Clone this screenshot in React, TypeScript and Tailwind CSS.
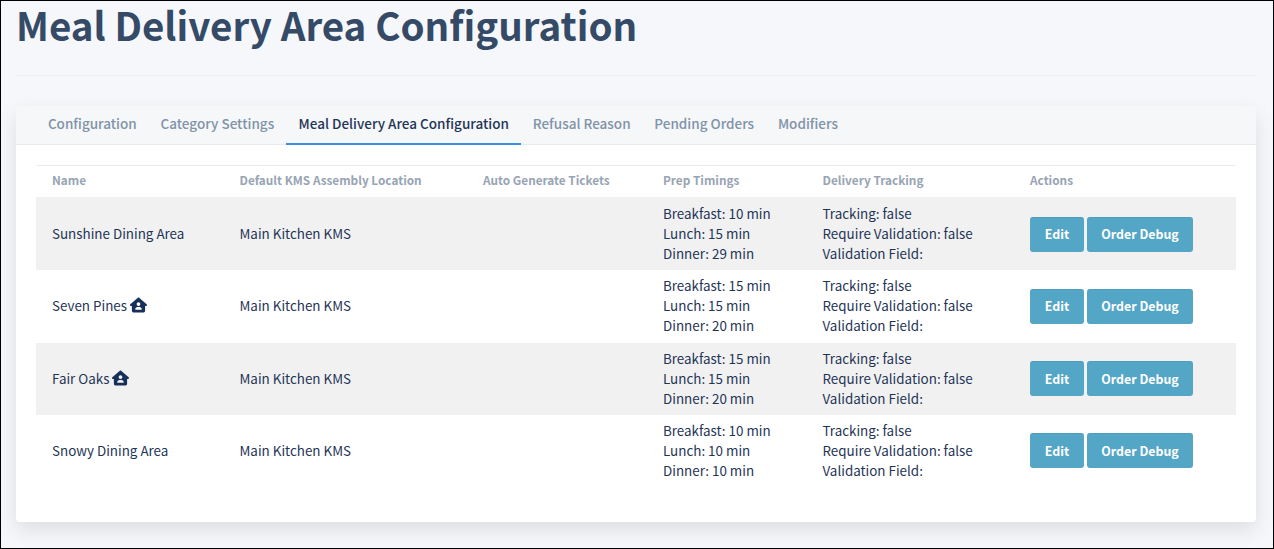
import React from "react";
import { FaHouseUser } from "react-icons/fa6";

const tabs = ["Configuration", "Category Settings", "Meal Delivery Area Configuration", "Refusal Reason", "Pending Orders", "Modifiers"];
const rows = [
  { name: "Sunshine Dining Area", home: false, t: [10, 15, 29], h: "h-[73px] bg-[#f1f1f1] text-[13.4px]", n: "pl-[16px]", c: "pl-[16px] leading-[20px]", b: "pl-[16px] pt-[2px]" },
  { name: "Seven Pines", home: true, t: [15, 15, 20], h: "h-[73px] bg-white text-[13.4px]", n: "pl-[16px] pb-[1px]", c: "pl-[16px] pb-[2px] leading-[20px]", b: "pl-[16px]" },
  { name: "Fair Oaks", home: true, t: [15, 15, 20], h: "h-[72px] bg-[#f1f1f1] text-[13.4px]", n: "pl-[16px]", c: "pl-[16px] pb-[1px] leading-[20px]", b: "pl-[16px]" },
  { name: "Snowy Dining Area", home: false, t: [10, 10, 10], h: "h-[72px] bg-white text-[13.4px]", n: "pl-[16px]", c: "pl-[16px] pb-[1px] leading-[20px]", b: "pl-[16px]" },
];

export default function App() {
  return (
    <div className="h-[549px] w-[1274px] overflow-hidden border border-black bg-[#f5f7fa] pl-[15px] pr-[17px] font-['Noto_Sans_CJK_SC',sans-serif] text-[#1f3557]">
      <h1 className="h-[75px] border-b border-[#eceef1] text-[38.55px] font-bold leading-[47px] text-[#344a66]">
        Meal Delivery Area Configuration
      </h1>
      <div className="mt-[30px] h-[416px] rounded-[4px] bg-white shadow-[0_8px_20px_rgba(0,0,0,0.1)]">
        <div className="flex h-[39px] rounded-t-[4px] border-b border-[#e9ecef] bg-[#f6f7f9] px-[20px]">
          {tabs.map((t, i) => (
            <div
              key={t}
              className={
                i === 2
                  ? "flex h-[39px] items-center border-b-2 border-[#3b8fe0] pl-[12.5px] pr-[12px] pb-[2px] text-[13.5px] font-medium text-[#1f3557]"
                  : "flex h-[38px] items-center px-[11.9px] pb-[3px] text-[13.5px] font-medium text-[#8093a7]"
              }
            >
              {t}
            </div>
          ))}
        </div>
        <div className="px-[20px] pt-[20px]">
          <table className="w-full table-fixed border-collapse border-t border-[#e9ecef] text-left">
            <thead>
              <tr className="h-[31px]">
                <th className="w-[187.5px] pb-[3px] pl-[16px] text-[11.8px] font-bold text-[#98a4b3]">Name</th>
                <th className="w-[243.5px] pb-[3px] pl-[16px] text-[11.8px] font-bold text-[#98a4b3]">Default KMS Assembly Location</th>
                <th className="w-[180px] pb-[3px] pl-[16px] text-[11.8px] font-bold text-[#98a4b3]">Auto Generate Tickets</th>
                <th className="w-[159.5px] pb-[3px] pl-[16px] text-[11.8px] font-bold text-[#98a4b3]">Prep Timings</th>
                <th className="w-[207.5px] pb-[3px] pl-[16px] text-[11.8px] font-bold text-[#98a4b3]">Delivery Tracking</th>
                <th className="pb-[3px] pl-[16px] text-[11.8px] font-bold text-[#98a4b3]">Actions</th>
              </tr>
            </thead>
            <tbody>
              {rows.map((r) => (
                <tr key={r.name} className={r.h}>
                  <td className={r.n}>
                    <span className="inline-flex items-center gap-[3px]">
                      {r.name}
                      {r.home && <FaHouseUser className="h-[16px] w-[17px] text-[#16305a]" />}
                    </span>
                  </td>
                  <td className={r.n}>Main Kitchen KMS</td>
                  <td className="pl-[16px]"></td>
                  <td className={r.c}>
                    <div>Breakfast: {r.t[0]} min</div>
                    <div>Lunch: {r.t[1]} min</div>
                    <div>Dinner: {r.t[2]} min</div>
                  </td>
                  <td className={r.c}>
                    <div>Tracking: false</div>
                    <div>Require Validation: false</div>
                    <div>Validation Field:</div>
                  </td>
                  <td className={r.b}>
                    <div className="flex gap-[3px]">
                      <button className="h-[35px] w-[54px] rounded-[3px] border-t border-[#4f9dbd] bg-[#54a6c7] text-[12.4px] font-bold text-white">Edit</button>
                      <button className="h-[35px] w-[106px] rounded-[3px] border-t border-[#4f9dbd] bg-[#54a6c7] text-[12.4px] font-bold text-white">Order Debug</button>
                    </div>
                  </td>
                </tr>
              ))}
            </tbody>
          </table>
        </div>
      </div>
    </div>
  );
}
